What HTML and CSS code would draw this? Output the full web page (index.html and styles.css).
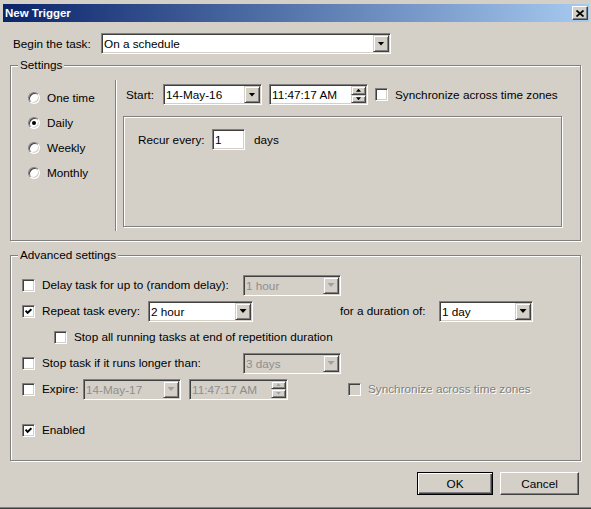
FILE: index.html
```html
<!DOCTYPE html>
<html lang="en">
<head>
  <meta charset="UTF-8" />
  <title>New Trigger</title>
  <link rel="stylesheet" href="styles.css">
</head>
<body>
  <div class="dialog">

    <!-- Title bar -->
    <div class="titlebar">
      <span class="title">New Trigger</span>
      <span class="close-btn raised">
        <svg width="8" height="7" viewBox="0 0 8 7"><path d="M0.5 0.5L7.5 6.5M7.5 0.5L0.5 6.5" stroke="#000" stroke-width="1.7"/></svg>
      </span>
    </div>

    <!-- Begin the task -->
    <div class="begin-row">
      <span class="begin-label">Begin the task:</span>
      <div class="combo begin-combo">
        <span class="combo-text">On a schedule</span>
        <span class="drop-btn raised"><i class="arrow"></i></span>
      </div>
    </div>

    <!-- Settings -->
    <fieldset class="group">
      <legend>Settings</legend>
      <div class="settings-body">
        <div class="freq-list">
          <div class="radio-row"><span class="radio"></span><span class="opt-label">One time</span></div>
          <div class="radio-row"><span class="radio on"></span><span class="opt-label">Daily</span></div>
          <div class="radio-row"><span class="radio"></span><span class="opt-label">Weekly</span></div>
          <div class="radio-row"><span class="radio"></span><span class="opt-label">Monthly</span></div>
        </div>
        <div class="vsep"></div>
        <div class="schedule">
          <div class="start-row">
            <span class="start-label">Start:</span>
            <div class="combo date-combo">
              <span class="combo-text">14-May-16</span>
              <span class="drop-btn raised"><i class="arrow"></i></span>
            </div>
            <div class="combo time-field">
              <span class="combo-text">11:47:17 AM</span>
              <span class="spin">
                <span class="spin-btn raised"><i class="arrow-sm up"></i></span>
                <span class="spin-btn raised"><i class="arrow-sm"></i></span>
              </span>
            </div>
            <span class="checkbox sync-check"></span>
            <span class="opt-label">Synchronize across time zones</span>
          </div>
          <div class="recur-box">
            <div class="recur-row">
              <span class="recur-label">Recur every:</span>
              <span class="textbox recur-input">1</span>
              <span class="days-label">days</span>
            </div>
          </div>
        </div>
      </div>
    </fieldset>

    <!-- Advanced settings -->
    <fieldset class="group advanced">
      <legend>Advanced settings</legend>
      <div class="adv-body">
        <div class="adv-row">
          <span class="checkbox"></span>
          <span class="opt-label w-201">Delay task for up to (random delay):</span>
          <div class="combo disabled w-98">
            <span class="combo-text">1 hour</span>
            <span class="drop-btn raised"><i class="arrow"></i></span>
          </div>
        </div>
        <div class="adv-row">
          <span class="checkbox checked">
            <svg width="7" height="7" viewBox="0 0 7 7"><path d="M0.6 2.8L2.6 4.9L6.4 1.1" fill="none" stroke="#000" stroke-width="2"/></svg>
          </span>
          <span class="opt-label w-106">Repeat task every:</span>
          <div class="combo w-105">
            <span class="combo-text">2 hour</span>
            <span class="drop-btn raised"><i class="arrow"></i></span>
          </div>
          <span class="duration-label">for a duration of:</span>
          <div class="combo w-94">
            <span class="combo-text">1 day</span>
            <span class="drop-btn raised"><i class="arrow"></i></span>
          </div>
        </div>
        <div class="adv-row nested">
          <span class="checkbox"></span>
          <span class="opt-label">Stop all running tasks at end of repetition duration</span>
        </div>
        <div class="adv-row">
          <span class="checkbox"></span>
          <span class="opt-label w-201">Stop task if it runs longer than:</span>
          <div class="combo disabled w-98">
            <span class="combo-text">3 days</span>
            <span class="drop-btn raised"><i class="arrow"></i></span>
          </div>
        </div>
        <div class="adv-row">
          <span class="checkbox"></span>
          <span class="opt-label w-41">Expire:</span>
          <div class="combo disabled w-98">
            <span class="combo-text">14-May-17</span>
            <span class="drop-btn raised"><i class="arrow"></i></span>
          </div>
          <div class="combo disabled time-field expire-time">
            <span class="combo-text">11:47:17 AM</span>
            <span class="spin">
              <span class="spin-btn raised"><i class="arrow-sm up"></i></span>
              <span class="spin-btn raised"><i class="arrow-sm"></i></span>
            </span>
          </div>
          <span class="checkbox disabled expire-sync"></span>
          <span class="opt-label muted">Synchronize across time zones</span>
        </div>
        <div class="adv-row enabled-row">
          <span class="checkbox checked">
            <svg width="7" height="7" viewBox="0 0 7 7"><path d="M0.6 2.8L2.6 4.9L6.4 1.1" fill="none" stroke="#000" stroke-width="2"/></svg>
          </span>
          <span class="opt-label">Enabled</span>
        </div>
      </div>
    </fieldset>

    <!-- OK / Cancel -->
    <div class="buttons">
      <span class="btn btn-default">OK</span>
      <span class="btn">Cancel</span>
    </div>

  </div>
</body>
</html>
```

FILE: styles.css
```css
* {
  box-sizing: border-box;
}

html, body {
  margin: 0;
}

body {
  font: 11.75px/14px "Liberation Sans", Arial, sans-serif;
  color: #000;
  background: #d4d0c8;
}

.dialog {
  width: 591px;
  height: 509px;
  background: #d4d0c8;
  border-bottom: 1px solid #404040;
  box-shadow: inset 0 -1px #808080;
  display: flex;
  flex-direction: column;
}

/* 3D edges */
.raised {
  background: #d4d0c8;
  border: 1px solid;
  border-color: #d4d0c8 #404040 #404040 #d4d0c8;
  box-shadow: inset 1px 1px #fff, inset -1px -1px #808080;
}

.titlebar {
  margin: 4px 2px 0 3px;
  height: 18px;
  padding: 0 1px 0 2px;
  display: flex;
  align-items: center;
  justify-content: space-between;
  background: linear-gradient(to right, #0a246a, #a6caf0);
}

.title {
  color: #fff;
  font-weight: bold;
  font-size: 11.5px;
}

.close-btn {
  width: 16px;
  height: 14px;
  display: flex;
  align-items: center;
  justify-content: center;
  border-color: #fff #404040 #404040 #fff;
  box-shadow: inset -1px -1px #808080;
}

.begin-row {
  margin-top: 11px;
  padding-left: 13px;
  display: flex;
  align-items: center;
  height: 21px;
}

.begin-label {
  width: 88px;
}

/* combo boxes and text fields */
.combo, .textbox {
  height: 21px;
  border: 1px solid;
  border-color: #808080 #fff #fff #808080;
  padding: 1px;
  box-shadow: inset 1px 1px #404040, inset -1px -1px #d4d0c8;
  background: #fff;
  display: flex;
  flex: none;
}

.combo-text {
  flex: 1;
  padding-left: 1px;
  line-height: 17px;
  white-space: nowrap;
  overflow: hidden;
}

.drop-btn {
  width: 16px;
  flex: none;
  display: flex;
  align-items: center;
  justify-content: center;
}

.arrow {
  width: 7px;
  height: 4px;
  background: #000;
  clip-path: polygon(0 0, 100% 0, 50% 100%);
}

.arrow-sm {
  width: 5px;
  height: 3px;
  background: #000;
  clip-path: polygon(0 0, 100% 0, 50% 100%);
}

.arrow-sm.up {
  clip-path: polygon(50% 0, 100% 100%, 0 100%);
}

.spin {
  width: 15px;
  display: flex;
  flex-direction: column;
}

.spin-btn {
  flex: 1;
  display: flex;
  align-items: center;
  justify-content: center;
}

.combo.disabled {
  background: #d4d0c8;
  color: #8e8e8e;
}

.combo.disabled .arrow,
.combo.disabled .arrow-sm {
  background: #a0a0a0;
}

.begin-combo { width: 290px; }
.date-combo { width: 99px; }
.time-field { width: 99px; margin-left: 7px; }

.w-41 { width: 41px; }
.w-94 { width: 94px; }
.w-98 { width: 98px; }
.w-105 { width: 105px; }
.w-106 { width: 106px; }
.w-201 { width: 201px; }

/* group boxes */
.group {
  margin: 4px 10px 0;
  padding: 0;
  min-width: 0;
  border: 1px solid #808080;
  box-shadow: inset 1px 1px #fff, 1px 1px #fff;
}

.group legend {
  margin-left: 7px;
  padding: 0 2px;
  line-height: 14px;
  background: #d4d0c8;
}

.group.advanced {
  margin-top: 7px;
}

.settings-body {
  height: 168px;
  display: flex;
}

.freq-list {
  width: 104px;
  padding: 13px 0 0 17px;
}

.radio-row {
  height: 25px;
  display: flex;
  align-items: center;
}

.radio {
  width: 12px;
  height: 12px;
  border-radius: 50%;
  border: 1px solid;
  border-color: #808080 #fff #fff #808080;
  box-shadow: inset 1px 1px #404040, inset -1px -1px #d4d0c8;
  background: #fff;
  display: flex;
  align-items: center;
  justify-content: center;
  flex: none;
}

.radio.on::after {
  content: "";
  width: 4px;
  height: 4px;
  border-radius: 50%;
  background: #000;
}

.opt-label {
  margin-left: 7px;
  white-space: nowrap;
  flex: none;
}

.vsep {
  width: 2px;
  height: 151px;
  margin-top: 8px;
  border-left: 1px solid #808080;
  border-right: 1px solid #fff;
}

.schedule {
  margin-left: 6px;
  padding-top: 12px;
}

.start-row {
  height: 21px;
  padding-left: 3px;
  display: flex;
  align-items: center;
}

.start-label {
  width: 37px;
}

.checkbox {
  width: 13px;
  height: 13px;
  flex: none;
  border: 1px solid;
  border-color: #808080 #fff #fff #808080;
  box-shadow: inset 1px 1px #404040, inset -1px -1px #d4d0c8;
  background: #fff;
  display: flex;
  align-items: center;
  justify-content: center;
}

.checkbox.disabled {
  background: #d4d0c8;
}

.sync-check {
  margin-left: 7px;
}

.recur-box {
  margin-top: 11px;
  width: 439px;
  height: 111px;
  border: 1px solid #808080;
  box-shadow: inset 1px 1px #fff, 1px 1px #fff;
  padding: 12px 0 0 14px;
}

.recur-row {
  display: flex;
  align-items: center;
  height: 21px;
}

.recur-label {
  width: 74px;
}

.recur-input {
  width: 33px;
  padding-left: 2px;
  line-height: 17px;
}

.days-label {
  margin-left: 9px;
}

.adv-body {
  height: 198px;
  padding: 10px 0 0 11px;
}

.adv-row {
  height: 26px;
  display: flex;
  align-items: center;
}

.adv-row.nested {
  padding-left: 32px;
}

.duration-label {
  margin-left: 87px;
  width: 99px;
  white-space: nowrap;
}

.expire-time {
  margin-left: 8px;
}

.expire-sync {
  margin-left: 60px;
}

.muted {
  color: #808080;
  text-shadow: 1px 1px #fff;
}

.enabled-row {
  margin-top: 15px;
}

.buttons {
  margin-top: 11px;
  padding-right: 12px;
  display: flex;
  justify-content: flex-end;
  gap: 7px;
}

.btn {
  width: 79px;
  height: 23px;
  display: flex;
  align-items: center;
  justify-content: center;
  border: 1px solid;
  border-color: #fff #404040 #404040 #fff;
  box-shadow: inset -1px -1px #808080;
}

.btn-default {
  width: 76px;
  border-color: #000;
  box-shadow: inset 1px 1px #fff, inset -1px -1px #404040, inset -2px -2px #808080;
}
```
